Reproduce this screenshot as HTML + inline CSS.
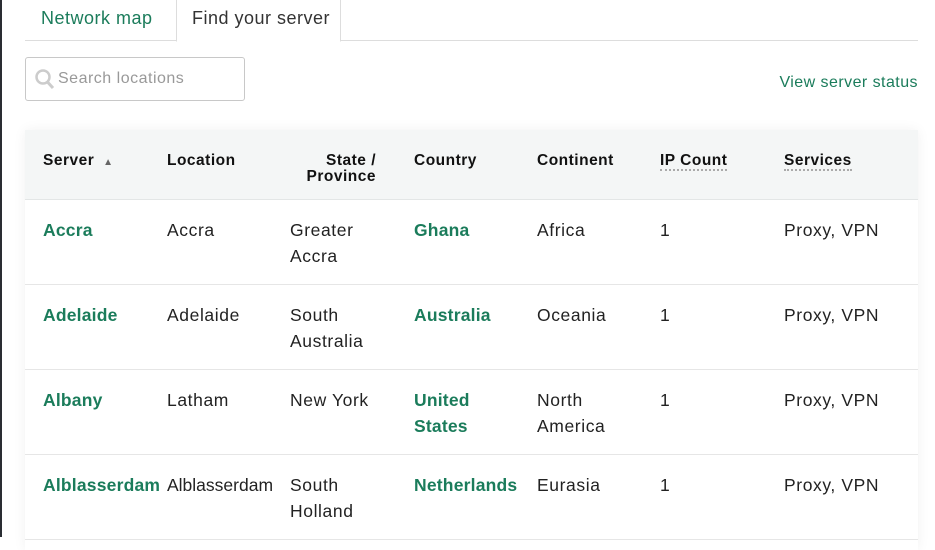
<!DOCTYPE html>
<html><head><meta charset="utf-8"><style>
*{box-sizing:border-box;margin:0;padding:0}
body{width:935px;height:537px;overflow:hidden;background:#fff;font-family:"Liberation Sans",sans-serif;color:#222;position:relative}
.lb{position:absolute;left:0;top:0;width:2px;height:537px;background:#2a2d33}
.tabs{position:absolute;left:25px;top:0;width:893px;height:41px;border-bottom:1px solid #ddd}
.tab{position:absolute;top:0;height:41px;font-size:18px;line-height:36px;letter-spacing:.5px}
.t1{left:16px;color:#1b7c5b}
.t2{left:151px;width:165px;border:1px solid #ddd;border-top:none;border-bottom:1px solid #fff;height:42px;background:#fff;padding-left:15px;color:#333}
.search{position:absolute;left:25px;top:57px;width:220px;height:44px;border:1px solid #c8c8c8;border-radius:3px;font-size:16px;color:#999;line-height:42px;padding-left:32px;letter-spacing:.5px}
.search svg{position:absolute;left:9px;top:11px}
.vs{position:absolute;right:17px;top:74px;font-size:16px;color:#1b7c5b;letter-spacing:.45px}
.card{position:absolute;left:25px;top:130px;width:893px;height:420px;box-shadow:0 0 12px rgba(0,0,0,.06)}
.hd{position:absolute;left:0;top:0;width:893px;height:70px;background:#f4f6f6;border-bottom:1px solid #e3e6e6}
.h{position:absolute;top:23px;font-size:15.5px;font-weight:bold;color:#111;line-height:16px;letter-spacing:.5px}
.u{border-bottom:2px dotted #aaa}
.row{position:absolute;left:0;width:893px;height:85px;border-bottom:1px solid #e6e6e6}
.c{position:absolute;top:17px;font-size:17.5px;line-height:26px;color:#222;letter-spacing:.6px}
.g{color:#1b7c5b;font-weight:bold;letter-spacing:.2px}
</style></head><body>
<div class="lb"></div>
<div class="tabs"><div class="tab t1">Network map</div><div class="tab t2">Find your server</div></div>
<div class="search"><svg width="20" height="22" viewBox="0 0 20 22"><circle cx="8" cy="8" r="6.5" fill="none" stroke="#ccc" stroke-width="2.5"/><line x1="12.5" y1="13" x2="18" y2="19" stroke="#ccc" stroke-width="3"/></svg>Search locations</div>
<div class="vs">View server status</div>
<div class="card">
<div class="hd">
<div class="h" style="left:18px">Server <span style="font-size:10px;color:#666;margin-left:4px">▲</span></div>
<div class="h" style="left:142px">Location</div>
<div class="h" style="left:265px;width:86px;text-align:right">State /<br>Province</div>
<div class="h" style="left:389px">Country</div>
<div class="h" style="left:512px">Continent</div>
<div class="h u" style="left:635px">IP Count</div>
<div class="h u" style="left:759px">Services</div>
</div>
<div class="row" style="top:70px"><div class="c g" style="left:18px">Accra</div><div class="c" style="left:142px">Accra</div><div class="c" style="left:265px">Greater<br>Accra</div><div class="c g" style="left:389px">Ghana</div><div class="c" style="left:512px">Africa</div><div class="c" style="left:635px">1</div><div class="c" style="left:759px">Proxy, VPN</div></div>
<div class="row" style="top:155px"><div class="c g" style="left:18px">Adelaide</div><div class="c" style="left:142px">Adelaide</div><div class="c" style="left:265px">South<br>Australia</div><div class="c g" style="left:389px">Australia</div><div class="c" style="left:512px">Oceania</div><div class="c" style="left:635px">1</div><div class="c" style="left:759px">Proxy, VPN</div></div>
<div class="row" style="top:240px"><div class="c g" style="left:18px">Albany</div><div class="c" style="left:142px">Latham</div><div class="c" style="left:265px">New York</div><div class="c g" style="left:389px">United<br>States</div><div class="c" style="left:512px">North<br>America</div><div class="c" style="left:635px">1</div><div class="c" style="left:759px">Proxy, VPN</div></div>
<div class="row" style="top:325px"><div class="c g" style="left:18px">Alblasserdam</div><div class="c" style="left:142px;letter-spacing:0">Alblasserdam</div><div class="c" style="left:265px">South<br>Holland</div><div class="c g" style="left:389px">Netherlands</div><div class="c" style="left:512px">Eurasia</div><div class="c" style="left:635px">1</div><div class="c" style="left:759px">Proxy, VPN</div></div>
</div>
</body></html>
